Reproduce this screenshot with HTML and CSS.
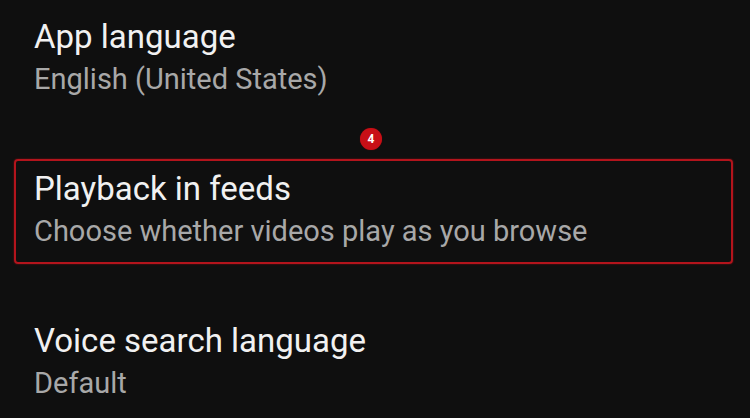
FILE: index.html
```html
<!DOCTYPE html>
<html lang="en">

<head>
  <meta charset="utf-8">
  <title>Settings</title>
  <link rel="stylesheet" href="styles.css">
</head>

<body>
  <main class="settings">
    <div class="item">
      <div class="title">App language</div>
      <div class="subtitle">English (United States)</div>
    </div>

    <div class="item highlighted">
      <span class="badge">4</span>
      <div class="title">Playback in feeds</div>
      <div class="subtitle">Choose whether videos play as you browse</div>
    </div>

    <div class="item">
      <div class="title">Voice search language</div>
      <div class="subtitle">Default</div>
    </div>
  </main>
</body>

</html>
```

FILE: styles.css
```css
body {
  margin: 0;
  background-color: #0f0f0f;
  font-family: 'Roboto', 'Noto Sans', sans-serif;
  width: 750px;
  height: 418px;
  overflow: hidden;
}

.settings {
  display: flex;
  flex-direction: column;
  padding-top: 17px;
}

.item {
  position: relative;
  padding: 0 34px;
}

.title {
  color: #f1f1f1;
  font-size: 33px;
  line-height: 40px;
}

.subtitle {
  color: #a8a8a8;
  font-size: 29px;
  line-height: 44px;
}

/* the boxed row that the badge points at */
.highlighted {
  margin: 58px 17px 0 14px;
  padding: 8px 0 9px 18px;
  border: 2px solid #b3141c;
  border-radius: 4px;
  box-shadow: 0 0 2px rgba(200, 20, 28, 0.6);
}

.highlighted + .item {
  margin-top: 57px;
}

.badge {
  position: absolute;
  top: -33px;
  left: 344px;
  width: 22px;
  height: 22px;
  border-radius: 50%;
  background-color: #c80f16;
  box-shadow: 0 0 1px #7a0a0e;
  color: #fff;
  font-size: 12px;
  font-weight: bold;
  line-height: 22px;
  text-align: center;
}
```
